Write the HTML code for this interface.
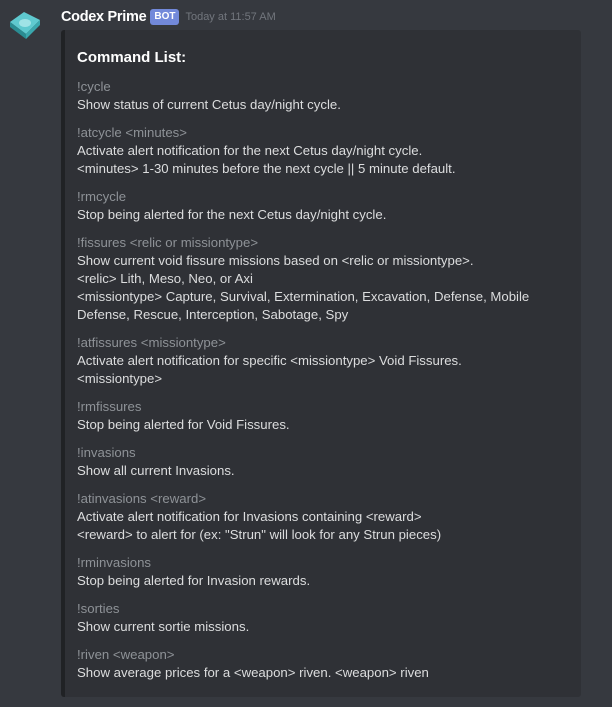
<!DOCTYPE html>
<html><head><style>
body{margin:0;width:612px;height:707px;background:#36393f;font-family:"Liberation Sans",sans-serif;position:relative;overflow:hidden}
.av{position:absolute;left:8px;top:8px}
.hdr{position:absolute;left:61px;top:7px;height:20px;display:flex;align-items:center;white-space:nowrap}
.nm{color:#fff;font-size:14.5px;font-weight:bold;letter-spacing:-0.3px}
.bot{background:#7289da;color:#fff;font-size:10px;font-weight:bold;padding:2px 4px;border-radius:3px;margin-left:4px;line-height:12px}
.ts{color:#72767d;font-size:11px;margin-left:6px}
.emb{position:absolute;left:61px;top:30px;width:520px;height:667px;background:#2f3136;border-left:4px solid #202225;border-radius:3px;box-sizing:border-box;padding:18px 0 0 12px}
.t{color:#fff;font-weight:bold;font-size:15px;line-height:20px;margin-bottom:9px}
.n{color:#8e9297;font-size:13.2px;line-height:19px;margin-top:9px}
.v{color:#dcddde;font-size:13.2px;line-height:18px}
</style></head><body>
<svg class="av" width="34" height="34" viewBox="0 0 34 34">
<polygon points="2,14 16,4 32,12 18,26" fill="#5fc9cf"/>
<polygon points="2,14 18,26 18,31 2,19" fill="#2a8c92"/>
<polygon points="18,26 32,12 32,17 18,31" fill="#3aa7ad"/>
<ellipse cx="17" cy="15" rx="6" ry="4" fill="#9fe3e6"/>
</svg>
<div class="hdr"><span class="nm">Codex Prime</span><span class="bot">BOT</span><span class="ts">Today at 11:57 AM</span></div>
<div class="emb">
<div class="t">Command List:</div>
<div class="n" style="margin-top:0">!cycle</div>
<div class="v">Show status of current Cetus day/night cycle.</div>
<div class="n">!atcycle &lt;minutes&gt;</div>
<div class="v">Activate alert notification for the next Cetus day/night cycle.<br>&lt;minutes&gt; 1-30 minutes before the next cycle || 5 minute default.</div>
<div class="n">!rmcycle</div>
<div class="v">Stop being alerted for the next Cetus day/night cycle.</div>
<div class="n">!fissures &lt;relic or missiontype&gt;</div>
<div class="v">Show current void fissure missions based on &lt;relic or missiontype&gt;.<br>&lt;relic&gt; Lith, Meso, Neo, or Axi<br>&lt;missiontype&gt; Capture, Survival, Extermination, Excavation, Defense, Mobile<br>Defense, Rescue, Interception, Sabotage, Spy</div>
<div class="n">!atfissures &lt;missiontype&gt;</div>
<div class="v">Activate alert notification for specific &lt;missiontype&gt; Void Fissures.<br>&lt;missiontype&gt;</div>
<div class="n">!rmfissures</div>
<div class="v">Stop being alerted for Void Fissures.</div>
<div class="n">!invasions</div>
<div class="v">Show all current Invasions.</div>
<div class="n">!atinvasions &lt;reward&gt;</div>
<div class="v">Activate alert notification for Invasions containing &lt;reward&gt;<br>&lt;reward&gt; to alert for (ex: "Strun" will look for any Strun pieces)</div>
<div class="n">!rminvasions</div>
<div class="v">Stop being alerted for Invasion rewards.</div>
<div class="n">!sorties</div>
<div class="v">Show current sortie missions.</div>
<div class="n">!riven &lt;weapon&gt;</div>
<div class="v">Show average prices for a &lt;weapon&gt; riven. &lt;weapon&gt; riven</div>
</div>
</body></html>
